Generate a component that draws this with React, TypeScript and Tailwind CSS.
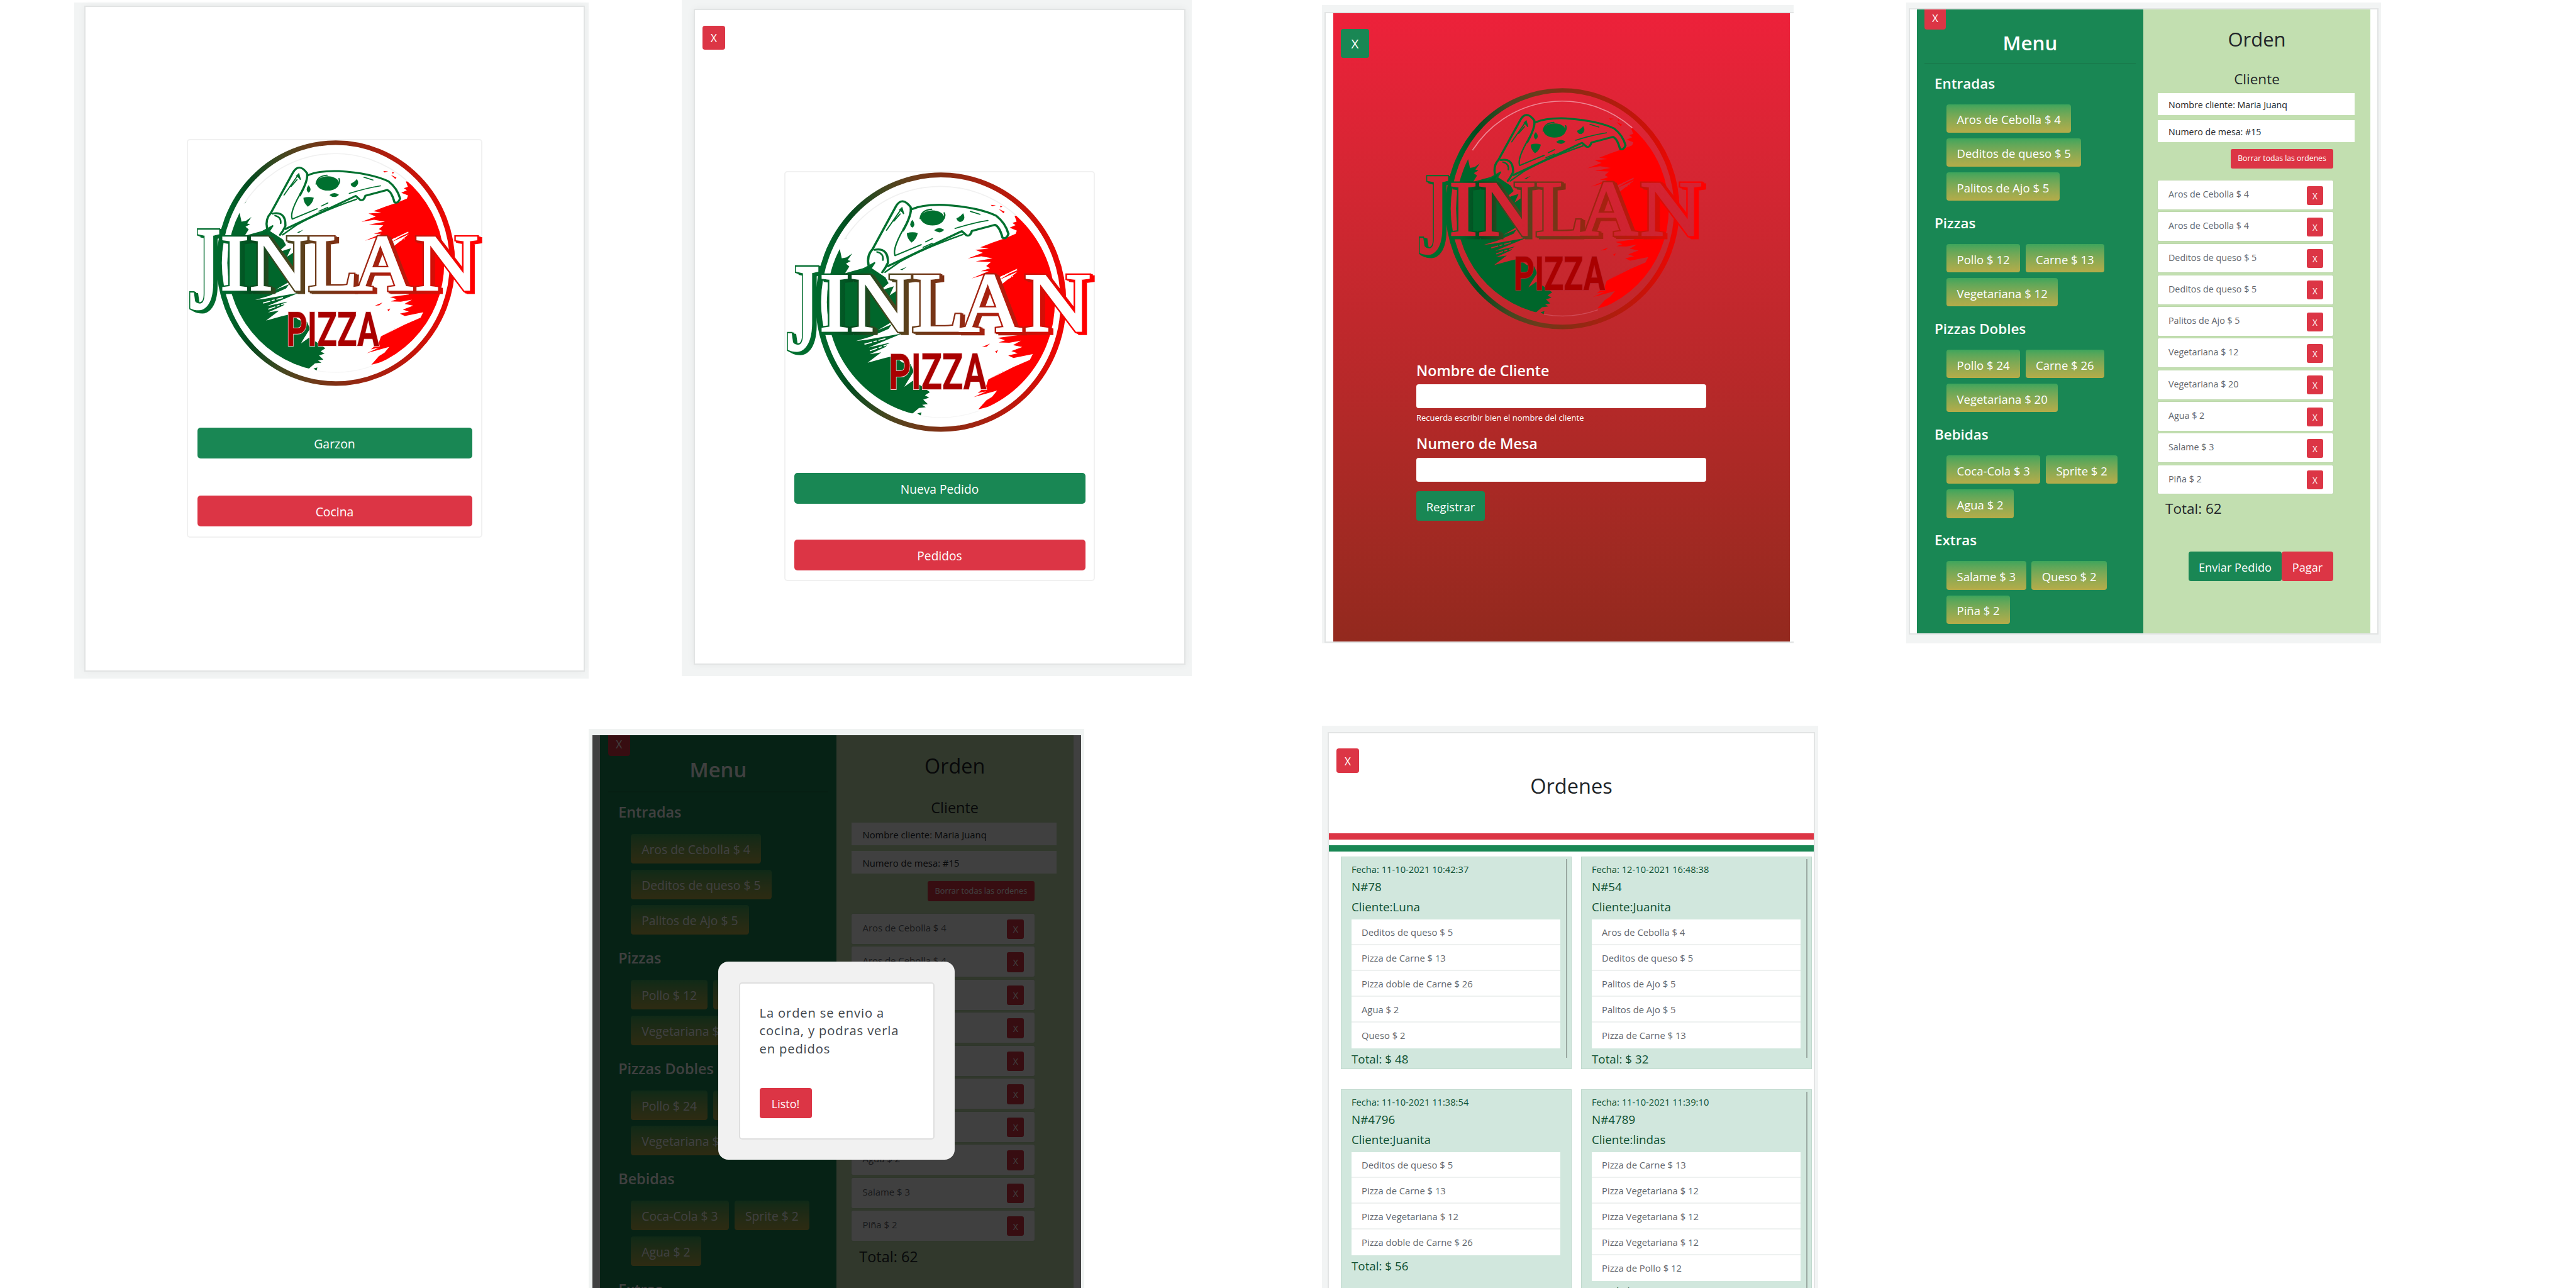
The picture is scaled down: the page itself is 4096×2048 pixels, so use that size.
import React from "react";

const menu = [
  { title: "Entradas", items: ["Aros de Cebolla $ 4", "Deditos de queso $ 5", "Palitos de Ajo $ 5"] },
  { title: "Pizzas", items: ["Pollo $ 12", "Carne $ 13", "Vegetariana $ 12"] },
  { title: "Pizzas Dobles", items: ["Pollo $ 24", "Carne $ 26", "Vegetariana $ 20"] },
  { title: "Bebidas", items: ["Coca-Cola $ 3", "Sprite $ 2", "Agua $ 2"] },
  { title: "Extras", items: ["Salame $ 3", "Queso $ 2", "Piña $ 2"] },
];

const orderItems = [
  "Aros de Cebolla $ 4",
  "Aros de Cebolla $ 4",
  "Deditos de queso $ 5",
  "Deditos de queso $ 5",
  "Palitos de Ajo $ 5",
  "Vegetariana $ 12",
  "Vegetariana $ 20",
  "Agua $ 2",
  "Salame $ 3",
  "Piña $ 2",
];

const tickets = [
  {
    date: "11-10-2021 10:42:37",
    n: "78",
    client: "Luna",
    total: 48,
    scroll: true,
    items: ["Deditos de queso $ 5", "Pizza de Carne $ 13", "Pizza doble de Carne $ 26", "Agua $ 2", "Queso $ 2"],
  },
  {
    date: "12-10-2021 16:48:38",
    n: "54",
    client: "Juanita",
    total: 32,
    scroll: true,
    items: ["Aros de Cebolla $ 4", "Deditos de queso $ 5", "Palitos de Ajo $ 5", "Palitos de Ajo $ 5", "Pizza de Carne $ 13"],
  },
  {
    date: "11-10-2021 11:38:54",
    n: "4796",
    client: "Juanita",
    total: 56,
    scroll: false,
    items: ["Deditos de queso $ 5", "Pizza de Carne $ 13", "Pizza Vegetariana $ 12", "Pizza doble de Carne $ 26"],
  },
  {
    date: "11-10-2021 11:39:10",
    n: "4789",
    client: "lindas",
    total: 61,
    scroll: true,
    items: ["Pizza de Carne $ 13", "Pizza Vegetariana $ 12", "Pizza Vegetariana $ 12", "Pizza Vegetariana $ 12", "Pizza de Pollo $ 12"],
  },
];

const letters = [
  { c: "J", x: 50, y: 1040, size: 690, w: 156 },
  { c: "I", x: 205, y: 935, size: 464, w: 146 },
  { c: "N", x: 352, y: 935, size: 464, w: 294 },
  { c: "L", x: 646, y: 935, size: 464, w: 250 },
  { c: "A", x: 870, y: 935, size: 464, w: 300 },
  { c: "N", x: 1180, y: 935, size: 464, w: 318 },
];

function Logo({ id, className, onRed = false }: { id: string; className: string; onRed?: boolean }) {
  const ink = `url(#${id}-ink)`;
  const paper = `url(#${id}-paper)`;
  return (
    <svg viewBox="38 60 1480 1435" preserveAspectRatio="none" className={className}>
      <defs>
        <linearGradient id={`${id}-ink`} gradientUnits="userSpaceOnUse" x1="40" y1="0" x2="1518" y2="0">
          <stop offset="0" stopColor="#00702f" />
          <stop offset="0.14" stopColor="#00662b" />
          <stop offset="0.21" stopColor="#034a1e" />
          <stop offset="0.32" stopColor="#434720" />
          <stop offset="0.42" stopColor="#6b3c1a" />
          <stop offset="0.5" stopColor="#7f3014" />
          <stop offset="0.63" stopColor="#a42210" />
          <stop offset="0.8" stopColor="#cc1108" />
          <stop offset="0.93" stopColor="#ff0000" />
        </linearGradient>
        <linearGradient id={`${id}-paper`} gradientUnits="userSpaceOnUse" x1="0" y1="60" x2="0" y2="1495">
          <stop offset="0" stopColor={onRed ? "#e22237" : "#ffffff"} />
          <stop offset="1" stopColor={onRed ? "#c0252c" : "#ffffff"} />
        </linearGradient>
        <clipPath id={`${id}-disc`}>
          <ellipse cx="784" cy="777" rx="543" ry="636" />
        </clipPath>
      </defs>
      <ellipse cx="784" cy="777" rx="584" ry="703" fill="none" stroke={ink} strokeWidth="27" />
      <path d="M325 430A543 636 0 0 1 1140 296" fill="none" stroke={onRed ? "#ee8592" : "#f1f1f1"} strokeWidth="6" />
      <path d="M690 1405A543 636 0 0 0 965 1378" fill="none" stroke={onRed ? "#d04a55" : "#f6f6f6"} strokeWidth="5" />
      <g clipPath={`url(#${id}-disc)`}>
        <path
          fill="#00662b"
          d="M200 470H300L312 535L335 530L362 508L340 545L355 550L332 565L348 580L328 618L375 602L430 585L470 555L455 590L520 640L535 672L488 720L530 700L560 690L540 740L572 715V840L545 890L484 932L550 900L535 925L450 968L380 992L430 985L600 950L440 1028L540 1002L520 1025L445 1065L500 1055L435 1112L520 1085L560 1075L600 1110L640 1120L655 1160L625 1215L610 1245L650 1212L690 1240L732 1274L708 1292L728 1305L700 1316L722 1340L695 1345L712 1358L680 1362L650 1392L500 1420H200Z"
        />
        <path d="M672 1392l20 -6l-4 18zM322 425l18 -22l-8 24zM590 598l32 -16l-22 18z" fill="#00662b" />
        <path
          fill="#ff0000"
          d="M1400 300H1135L1145 332L1125 340L1140 352L1112 366L1146 382L1140 400L1095 422L1030 448L972 474L1012 482L948 488L984 505L912 536L976 524L1030 535L950 552L1022 556L1000 578L1018 590L975 606L1012 606L930 646L1010 620L1060 642L1152 590L1060 656L1150 608L1062 690L1040 700L1150 960L1055 975L1090 988L1060 1000L1110 1002L1165 990L1128 1015L1172 1025L1120 1048L1150 1060L1105 1072L1130 1086L1222 1064L1208 1096L1130 1135L1020 1200L1170 1100L1010 1205L1000 1240L960 1280L1000 1270L940 1302L1052 1266L1028 1300L1000 1320L962 1370L1060 1340V1440H1400Z"
        />
        <path d="M1022 240l24 2l-18 6zM1060 262l28 16l-6 8zM1065 245l12 4l-8 6zM980 1025l38 -18l-16 16zM1042 1050l14 -8l-6 16z" fill="#ff0000" />
        <path
          d="M1052 648L1150 596M1062 668L1128 634M420 1010L520 978M446 1046L560 1000M1020 1192L1212 1080"
          fill="none"
          stroke={paper}
          strokeWidth="6"
          strokeDasharray="38 7 16 9"
        />
      </g>
      <g stroke="#00702f" strokeWidth="11" fill="none" strokeLinejoin="round" strokeLinecap="round">
        <path d="M440 575Q430 520 458 486L570 248Q600 190 640 252Q648 290 604 382" />
        <path d="M620 345Q550 480 566 520L690 460" strokeWidth="7" />
        <path d="M642 265Q700 236 800 240Q960 252 1048 300Q1092 340 1106 400Q1096 432 1078 422Q1064 360 1042 350L932 384Q924 416 906 408L884 385L532 578" />
        <path d="M888 404Q700 480 586 556L518 612" strokeWidth="8" />
        <path d="M468 488Q534 474 532 560Q520 590 505 612" />
        <path d="M480 500Q512 508 508 545M445 600L468 560L400 604M452 612L460 628" strokeWidth="8" />
        <path d="M525 380L594 265L606 288M560 330L590 290" strokeWidth="6" />
        <path d="M852 370Q940 338 1008 326M925 276L970 292M712 444L744 426M700 474L744 452" strokeWidth="6" />
        <path d="M686 316Q690 268 740 264M800 284Q806 300 798 316" strokeWidth="7" />
      </g>
      <g fill="#00702f">
        <ellipse cx="744" cy="312" rx="56" ry="42" />
        <path d="M890 286Q906 318 880 334Q862 334 858 314Q876 306 890 286Z" />
        <path d="M648 322Q668 350 648 366Q628 350 648 322Z" />
        <path d="M622 396Q650 386 674 396Q668 430 644 448Q622 424 622 396Z" />
        <path d="M752 380Q776 358 800 378Q778 404 752 380Z" />
        <path d="M584 268L600 250L610 290Z" />
      </g>
      <g fontFamily="Liberation Serif" fontWeight="400">
        <g fill={ink} stroke={ink} strokeWidth="26">
          <use href={`#${id}-word`} />
          <use href={`#${id}-word`} x="8" y="5" />
          <use href={`#${id}-word`} x="17" y="11" />
        </g>
        <g fill={paper} stroke={paper} strokeWidth="10">
          <g id={`${id}-word`}>
            {letters.map((l, i) => (
              <text key={i} x={l.x} y={l.y} fontSize={l.size} textLength={l.w} lengthAdjust="spacingAndGlyphs">
                {l.c}
              </text>
            ))}
          </g>
        </g>
      </g>
      <text
        x="536"
        y="1259"
        fontFamily="Roboto"
        fontWeight="700"
        fontSize="276"
        textLength="466"
        lengthAdjust="spacingAndGlyphs"
        fill="#a90000"
        stroke={onRed ? "#b8222b" : "#f4d4d4"}
        strokeWidth="7"
        style={{ paintOrder: "stroke" }}
      >
        PIZZA
      </text>
    </svg>
  );
}

function HomeCard({ id, top, bottom, className, logo, gap1, gap2, btn }: Record<string, string>) {
  return (
    <div className={`flex flex-col items-center rounded-[5px] border-2 border-[#f1f1f1] ${className}`}>
      <Logo id={id} className={logo} />
      <div className={`flex shrink-0 items-center justify-center rounded-[5px] bg-[#198754] pt-[3px] text-white ${btn} ${gap1}`}>{top}</div>
      <div className={`flex shrink-0 items-center justify-center rounded-[5px] bg-[#dc3545] pt-[3px] text-white ${btn} ${gap2}`}>{bottom}</div>
    </div>
  );
}

function OrderScreen() {
  return (
    <div className="flex h-[992px] w-[721px] shrink-0">
      <div className="w-[360px] shrink-0 bg-[#198754] text-white">
        <div className="ml-3 flex h-8 w-[34px] items-center justify-center rounded-b-[4px] bg-[#dc3545] pb-1 text-[16.5px] leading-none">X</div>
        <div className="h-[43px] text-center text-[31.4px] font-semibold leading-[42px]">Menu</div>
        <div className="mx-3 mt-[10px] h-[2px] bg-[#187c4d]" />
        {menu.map((s, i) => (
          <div key={s.title} className={i === 0 ? "pt-[15.5px]" : "pt-[20.8px]"}>
            <div className="ml-7 h-[30px] text-[22.4px] font-semibold leading-[30px]">{s.title}</div>
            <div className="ml-[47px] mt-[18px] flex w-[300px] flex-wrap gap-x-[8.5px] gap-y-[9px]">
              {s.items.map((t) => (
                <div key={t} className="flex h-[45.2px] items-center rounded-[4px] bg-gradient-to-b from-[#3ca55c] to-[#b5ac49] px-[16.5px] pt-[4px] text-[18.5px]">
                  {t}
                </div>
              ))}
            </div>
          </div>
        ))}
      </div>
      <div className="w-[361px] shrink-0 bg-[#c2dfb0] text-[#212529]">
        <div className="mt-[25px] h-11 text-center text-[31px] font-medium leading-[44px]">Orden</div>
        <div className="mt-[27px] h-[30px] text-center text-[22.5px] font-medium leading-[30px]">Cliente</div>
        <div className="ml-[23px] mt-[7px] w-[313px] text-[14.2px] font-medium">
          <div className="h-[35px] bg-white pl-[17px] leading-[37px]">Nombre cliente: Maria Juanq</div>
          <div className="mt-2 h-[35px] bg-white pl-[17px] leading-[37px]">Numero de mesa: #15</div>
        </div>
        <div className="ml-[23px] mt-[11px] w-[279px]">
          <div className="ml-auto flex h-[31px] w-[163px] items-center justify-center rounded-[3px] bg-[#dc3545] text-[12.2px] font-medium text-white">
            Borrar todas las ordenes
          </div>
          <div className="mt-[19px] flex flex-col gap-[4.4px]">
            {orderItems.map((t, i) => (
              <div key={i} className="flex h-[45.9px] justify-between rounded-[2px] bg-white pl-[17px] pr-4 text-[14.3px] text-[#5f666d] shadow-[0_0_1px_rgba(0,0,0,0.3)]">
                <span className="leading-[43px]">{t}</span>
                <span className="mt-[8.6px] flex h-[30px] w-[26px] items-center justify-center rounded-[3px] bg-[#dc3545] pt-[2px] text-[13.6px] font-medium leading-none text-white">X</span>
              </div>
            ))}
          </div>
          <div className="ml-3 mt-[9px] h-[30px] text-[22.5px] font-medium leading-[30px]">Total: 62</div>
          <div className="mt-[53px] flex h-[47px] justify-end text-[18.2px] text-white">
            <div className="flex w-[148px] items-center justify-center rounded-[4px] bg-[#198754] pt-[4px]">Enviar Pedido</div>
            <div className="flex w-[82px] items-center justify-center rounded-[4px] bg-[#dc3545] pt-[4px]">Pagar</div>
          </div>
        </div>
      </div>
    </div>
  );
}

function CloseButton({ className }: { className: string }) {
  return <div className={`flex items-center justify-center rounded-[4px] pt-[1px] leading-none text-white ${className}`}>X</div>;
}

function Ticket({ t }: { t: (typeof tickets)[number] }) {
  return (
    <div className="relative h-[338px] overflow-hidden border border-[#bfd9cd] bg-[#d1e7dd] pl-4 pr-[17px] font-medium text-[#0f5132]">
      <div className="mt-[8px] h-[22px] whitespace-nowrap text-[14.7px] leading-[22px]">Fecha: {t.date}</div>
      <div className="mt-[3px] h-[28px] text-[18.8px] leading-[28px]">N#{t.n}</div>
      <div className="mt-[4px] h-[28px] text-[18.8px] leading-[28px]">Cliente:{t.client}</div>
      <div className="mt-[6px] divide-y-2 divide-[#eef1f0] bg-white font-normal text-[#5f666d]">
        {t.items.map((it, i) => (
          <div key={i} className="h-[41px] pl-4 text-[14.8px] leading-[41px]">{it}</div>
        ))}
      </div>
      <div className="mt-[4px] h-[26px] text-[18.8px] leading-[26px]">Total: $ {t.total}</div>
      {t.scroll && <div className="absolute right-[6px] top-[3px] h-[316px] w-[2px] bg-[#9aa9a2]" />}
    </div>
  );
}

export default function App() {
  return (
    <div className="flex h-[2048px] w-[4096px] flex-col overflow-hidden bg-white font-['Open_Sans',sans-serif]">
      <div className="flex h-[1154px] shrink-0 items-start">
        {/* Home */}
        <div className="ml-[118px] mt-1 h-[1075px] w-[818px] bg-[#f2f4f4] pl-4 pt-[5px]">
          <div className="flex h-[1059px] w-[796px] flex-col items-center border-2 border-[#e2e4e4] bg-white pt-[210px] shadow-[0_0_12px_rgba(0,0,0,0.04)]">
            <HomeCard
              id="home"
              top="Garzon"
              bottom="Cocina"
              className="h-[634px] w-[470px]"
              logo="h-[391px] w-[470px] shrink-0"
              gap1="mt-[66px]"
              gap2="mt-[59px]"
              btn="h-[49px] w-[437px] text-[19.4px]"
            />
          </div>
        </div>

        {/* Waiter */}
        <div className="ml-[148px] h-[1075px] w-[811px] bg-[#f2f4f4] pl-[19px] pt-[14px]">
          <div className="flex h-[1043px] w-[782px] flex-col border-2 border-[#e2e4e4] bg-white pt-[25px] shadow-[0_0_12px_rgba(0,0,0,0.05)]">
            <CloseButton className="ml-[12px] h-[38px] w-9 bg-[#dc3545] text-[17.3px]" />
            <div className="mt-[193px] flex justify-center">
              <HomeCard
                id="waiter"
                top="Nueva Pedido"
                bottom="Pedidos"
                className="h-[652px] w-[494px]"
                logo="h-[413px] w-[494px] shrink-0"
                gap1="mt-[65px]"
                gap2="mt-[57px]"
                btn="h-[49px] w-[463px] text-[19.2px]"
              />
            </div>
          </div>
        </div>

        {/* Client registration */}
        <div className="ml-[207px] mt-2 h-[1015px] w-[750px] bg-[#f2f4f4] pl-[4px] pt-[11px]">
          <div className="h-[1003px] w-[746px] border-y-2 border-l-2 border-[#e2e4e4] bg-white pl-[12px]">
            <div className="flex h-full w-[726px] flex-col bg-gradient-to-b from-[#ed213a] to-[#93291e] pt-[25px]">
              <CloseButton className="ml-[12px] h-[46px] w-[45px] bg-[#198754] text-[20.5px]" />
              <div className="ml-[132px] mt-[48px] w-[461px] text-white">
                <Logo id="client" onRed className="h-[384px] w-[461px]" />
                <div className="mt-[49px] h-[32px] text-[23.3px] font-semibold leading-[32px]">Nombre de Cliente</div>
                <div className="mt-[6px] h-[38px] rounded-[4px] bg-white" />
                <div className="mt-[4px] h-[22px] text-[13px] font-medium leading-[22px]">Recuerda escribir bien el nombre del cliente</div>
                <div className="mt-[14px] h-[32px] text-[23.3px] font-semibold leading-[32px]">Numero de Mesa</div>
                <div className="mt-[7px] h-[38px] rounded-[4px] bg-white" />
                <div className="mt-[15px] flex h-[47px] w-[109px] items-center justify-center rounded-[4px] bg-[#198754] pt-[3px] text-[18.6px]">Registrar</div>
              </div>
            </div>
          </div>
        </div>

        {/* Order */}
        <div className="ml-[179px] mt-1 h-[1019px] w-[755px] bg-[#f2f4f4] pl-[4px] pt-[9px]">
          <div className="flex h-[996px] w-[747px] border-2 border-[#e2e4e4] bg-white pl-[11px]">
            <OrderScreen />
          </div>
        </div>
      </div>

      <div className="flex h-[894px] shrink-0 items-start">
        {/* Order with confirmation */}
        <div className="ml-[936px] mt-[5px] h-[889px] w-[788px] bg-[#f0f3f2] pl-[6px] pt-[10px]">
          <div className="relative flex h-[879px] w-[777px] items-start overflow-hidden bg-white pl-[12px]">
            <div className="[zoom:1.0438]">
              <OrderScreen />
            </div>
            <div className="absolute inset-0 bg-black/75" />
            <div className="absolute left-[200px] top-[360px] flex h-[315px] w-[376px] items-center justify-center rounded-[16px] bg-[#f1f1f1]">
              <div className="h-[250px] w-[311px] rounded-[5px] border-2 border-[#dfdfdf] bg-white pl-[31px] pt-[32px]">
                <div className="w-[250px] whitespace-nowrap text-[20.2px] leading-[28.5px] tracking-[0.85px] text-[#41464b]">
                  La orden se envio a<br />cocina, y podras verla<br />en pedidos
                </div>
                <div className="mt-[49px] flex h-[48px] w-[83px] items-center justify-center rounded-[4px] bg-[#dc3545] pt-[2px] text-[18px] font-medium text-white">Listo!</div>
              </div>
            </div>
          </div>
        </div>

        {/* Tickets */}
        <div className="ml-[378px] h-[894px] w-[789px] bg-[#f2f4f4] pl-[9px] pt-[10px]">
          <div className="h-[900px] w-[775px] border-2 border-[#e2e4e4] bg-white pt-[24px]">
            <CloseButton className="ml-[12px] h-[39px] w-9 bg-[#dc3545] pt-[3px] text-[17.3px]" />
            <div className="mt-[-1px] h-[44px] text-center text-[32.6px] font-medium leading-[44px] text-[#212529]">Ordenes</div>
            <div className="mt-[53px] h-[10px] bg-[#dc3545]" />
            <div className="mt-[9px] h-[10px] bg-[#198754]" />
            <div className="ml-[19px] mt-[8px] grid w-[749px] grid-cols-2 gap-x-[15px] gap-y-[32px]">
              {tickets.map((t) => (
                <Ticket key={t.n} t={t} />
              ))}
            </div>
          </div>
        </div>
      </div>
    </div>
  );
}
